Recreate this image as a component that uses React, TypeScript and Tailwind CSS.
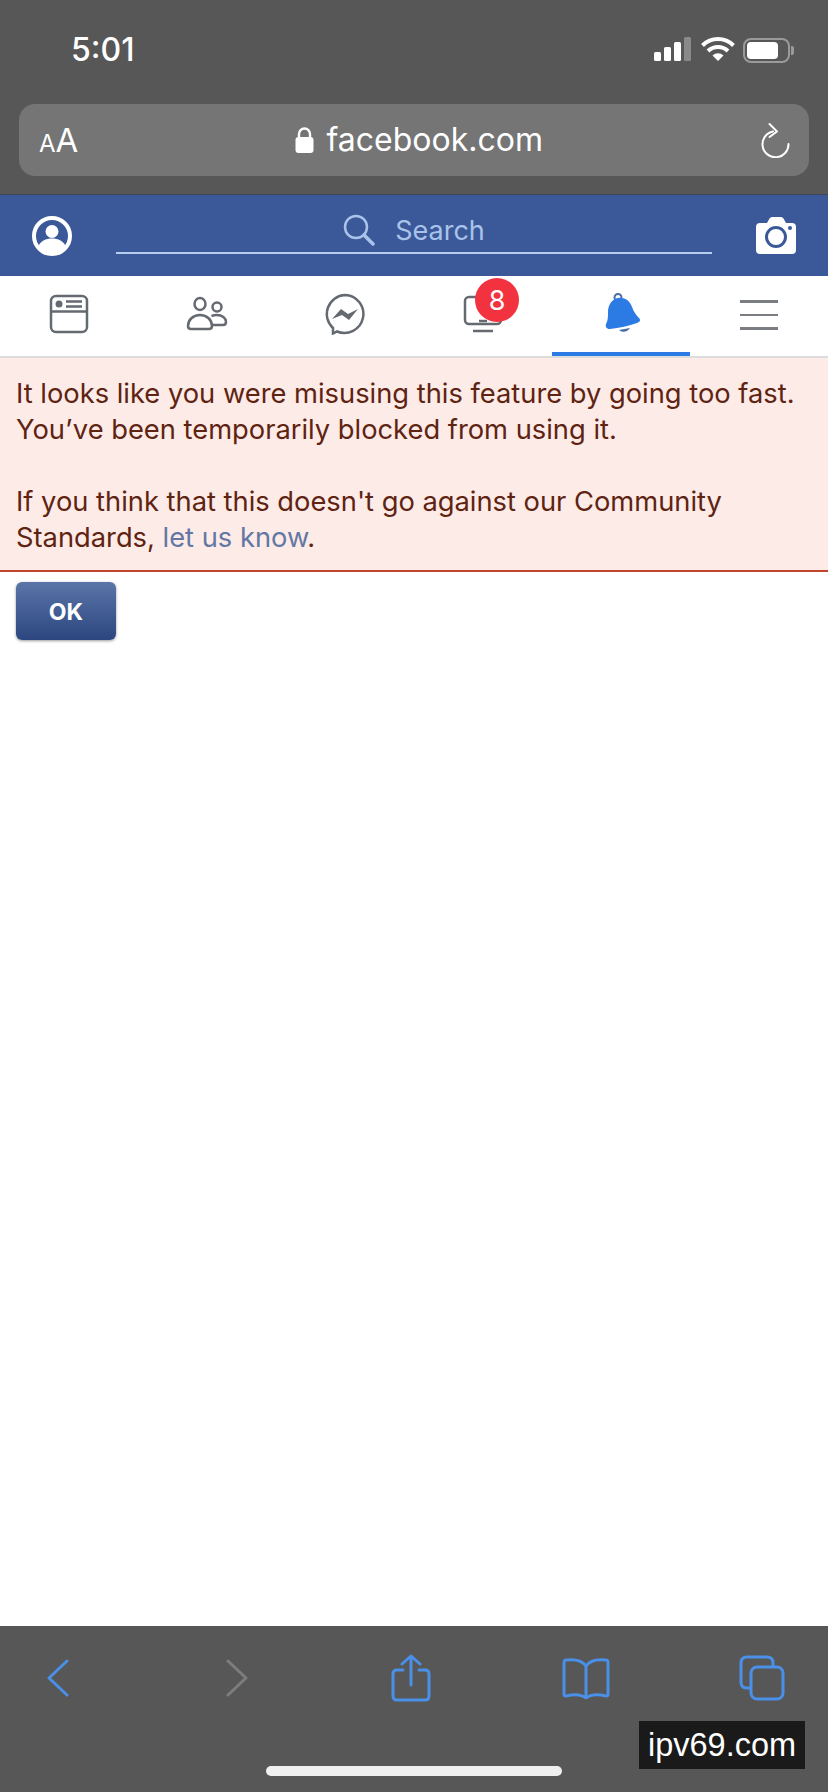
const BLUE = '#4a8fe8';
const NAV_GREY = '#656a70';

function StatusIcons() {
  return (
    <div className="flex items-center">
      <svg width="40" height="26" viewBox="0 0 40 26" className="mr-[7px]">
        <rect x="0" y="15" width="7" height="9" rx="1.5" fill="#fff" />
        <rect x="10" y="10" width="7" height="14" rx="1.5" fill="#fff" />
        <rect x="20" y="5" width="7" height="19" rx="1.5" fill="#fff" />
        <rect x="30" y="0" width="7" height="24" rx="1.5" fill="#8a8a8a" />
      </svg>
      <svg width="34" height="26" viewBox="0 0 34 26" className="mr-[8px]">
        <path d="M1.5 8.5a22 22 0 0 1 31 0" fill="none" stroke="#fff" strokeWidth="4" />
        <path d="M7 14a14.5 14.5 0 0 1 20 0" fill="none" stroke="#fff" strokeWidth="4" />
        <path d="M17 24l-5.5-5.5a8 8 0 0 1 11 0z" fill="#fff" />
      </svg>
      <div className="flex items-center">
        <div className="flex h-[25px] w-[47px] items-center rounded-[8px] border-2 border-[#9a9a9a] px-[2px]">
          <div className="h-[17px] w-[31px] rounded-[4px] bg-white" />
        </div>
        <div className="ml-[1px] h-[9px] w-[3px] rounded-r-[2px] bg-[#9a9a9a]" />
      </div>
    </div>
  );
}

function Reload() {
  return (
    <svg width="32" height="36" viewBox="0 0 32 36" fill="none" stroke="#fff" strokeWidth="2" strokeLinecap="round" strokeLinejoin="round">
      <path d="M13 9.500a13 13 0 1 0 15.500 12.500" />
      <path d="M9.500 2l7.500 7.500L9.500 15" />
    </svg>
  );
}

function SafariTop() {
  return (
    <div className="h-[195px] border-b border-[#3d4656] bg-[#575757]">
      <div className="flex h-[104px] items-center justify-between pb-[4px] pl-[71px] pr-[34px]">
        <span className="font-['Inter',sans-serif] text-[32px] font-medium leading-none text-white">5:01</span>
        <StatusIcons />
      </div>
      <div className="mx-[19px] flex h-[72px] items-center justify-between rounded-[16px] bg-[#757575] pl-[20px] pr-[17px]">
        <span className="font-['Inter',sans-serif] leading-none text-white">
          <span className="text-[24px]">A</span>
          <span className="text-[33px]">A</span>
        </span>
        <div className="flex items-center gap-[12px]">
          <svg width="19" height="26" viewBox="0 0 19 26" fill="#fff">
            <path d="M4 11V7a5.500 5.500 0 0 1 11 0v4" fill="none" stroke="#fff" strokeWidth="2.400" />
            <rect x="0.500" y="10" width="18" height="16" rx="3" />
          </svg>
          <span className="font-['Inter',sans-serif] text-[32px] leading-none text-white">facebook.com</span>
        </div>
        <Reload />
      </div>
    </div>
  );
}

function FbHeader() {
  return (
    <div className="flex h-[81px] items-center bg-[#3b5998] pl-[32px] pr-[32px]">
      <svg width="40" height="40" viewBox="0 0 40 40" className="shrink-0">
        <circle cx="20" cy="20" r="18" fill="#3b5998" stroke="#fff" strokeWidth="4" />
        <circle cx="20" cy="15.500" r="6.500" fill="#fff" />
        <path d="M6 31c2-6 8-8.500 14-8.500S32 25 34 31a18 18 0 0 1-28 0z" fill="#fff" />
      </svg>
      <div className="ml-[44px] mt-[16px] flex h-[43px] w-[597px] items-center justify-center gap-[20px] self-start border-b-2 border-[#b4cdf0] pb-[3px]">
        <svg width="32" height="32" viewBox="0 0 32 32" fill="none" stroke="#a9c3ea" strokeWidth="2.500" strokeLinecap="round">
          <circle cx="13" cy="13" r="11" />
          <path d="M21 21l9 9" strokeWidth="3.500" />
        </svg>
        <span className="font-['Inter',sans-serif] text-[27px] leading-none text-[#a9c3ea]">Search</span>
      </div>
      <svg width="40" height="37" viewBox="0 0 40 37" className="ml-[44px] shrink-0">
        <path d="M4 6h7l2.500-4.500Q14.500 0 16 0h9q1.500 0 2.500 1.500L30 6h6q4 0 4 4v23q0 4-4 4H4q-4 0-4-4V10q0-4 4-4z" fill="#fff" />
        <circle cx="20" cy="20" r="9.500" fill="#fff" stroke="#3b5998" strokeWidth="3" />
        <circle cx="34" cy="11" r="2" fill="#3b5998" />
      </svg>
    </div>
  );
}

function NavIcon({ index }: { index: number }) {
  if (index === 0) {
    return (
      <svg width="40" height="40" viewBox="0 0 40 40" fill="none" stroke={NAV_GREY} strokeWidth="2.500">
        <rect x="2" y="2" width="36" height="36" rx="5" />
        <path d="M2 17.500h36" />
        <circle cx="10" cy="10" r="3.500" fill={NAV_GREY} stroke="none" />
        <path d="M17 7.500h16M17 12.500h16" />
      </svg>
    );
  }
  if (index === 1) {
    return (
      <svg width="42" height="36" viewBox="0 0 42 36" fill="none" stroke={NAV_GREY} strokeWidth="2.500">
        <ellipse cx="14" cy="8" rx="5.500" ry="6" />
        <circle cx="31" cy="11" r="4.500" />
        <path d="M5 33h18q3 0 3-3c0-6-5-11-12-11S2 24 2 30q0 3 3 3z" />
        <path d="M26 29h11q3 0 3-3c0-4-4-7-9-7q-3 0-5.500 1" />
      </svg>
    );
  }
  if (index === 2) {
    return (
      <svg width="42" height="42" viewBox="0 0 42 42" fill="none" stroke={NAV_GREY} strokeWidth="2.500">
        <path d="M21 2a19 19 0 1 1-8 36.500L9 40.500V35A19 19 0 0 1 21 2z" />
        <path d="M8 26l9-10 7 5 10-5-9 11-7-5z" fill={NAV_GREY} stroke="none" />
      </svg>
    );
  }
  if (index === 3) {
    return (
      <div className="relative h-[38px] w-[40px]">
        <svg width="40" height="38" viewBox="0 0 40 38" fill="none" stroke={NAV_GREY} strokeWidth="2.500">
          <rect x="2" y="2" width="36" height="27" rx="4" />
          <path d="M10 36h20" />
          <path d="M16 26h8" />
        </svg>
        <div className="absolute left-[12px] top-[-17px] flex h-[44px] w-[44px] items-center justify-center rounded-full bg-[#f2323f] font-['Inter',sans-serif] text-[27px] leading-none text-white">
          8
        </div>
      </div>
    );
  }
  if (index === 4) {
    return (
      <svg width="36" height="42" viewBox="0 0 36 42" className="ml-[3px]">
        <circle cx="13" cy="4.500" r="3.500" fill="none" stroke="#4a6da8" strokeWidth="2" />
        <path d="M13 5c7-1 12 3 14 9 2 5 4 8 7 11 2 2 1 4-2 5-8 3-18 5-27 6-3 0-5-2-4-5 2-4 2-7 2-12C3 12 7 6 13 5z" fill="#2c7be5" />
        <path d="M14 37c3 3 9 2 11-2z" fill="#4a6da8" />
      </svg>
    );
  }
  return (
    <div className="mt-[2px] flex w-[38px] flex-col gap-[11px]">
      <div className="h-[2.500px] bg-[#7a7e83]" />
      <div className="h-[2.500px] bg-[#7a7e83]" />
      <div className="h-[2.500px] bg-[#7a7e83]" />
    </div>
  );
}

function FbNav() {
  return (
    <div className="grid h-[82px] grid-cols-6 border-b-2 border-[#dddddd] bg-white">
      {[0, 1, 2, 3, 4, 5].map((i) => (
        <div
          key={i}
          className={i === 4 ? 'flex items-center justify-center border-b-4 border-[#2c7be5]' : 'flex items-center justify-center pb-[4px]'}
        >
          <NavIcon index={i} />
        </div>
      ))}
    </div>
  );
}

function Notice() {
  return (
    <div className="border-b-2 border-[#c0452a] bg-[#fdebe7] px-[16px] pt-[18px] pb-[14px] font-['Inter',sans-serif] text-[27.300px] leading-[36px] text-[#5f2312]">
      <p>It looks like you were misusing this feature by going too fast.</p>
      <p>You’ve been temporarily blocked from using it.</p>
      <p className="mt-[36px]">If you think that this doesn't go against our Community</p>
      <p>
        Standards, <span className="text-[#6277a4]">let us know</span>.
      </p>
    </div>
  );
}

function BarIcon({ children }: { children: React.ReactNode }) {
  return <div className="flex w-[48px] justify-center">{children}</div>;
}

function SafariBottom() {
  return (
    <div className="relative h-[166px] bg-[#575757]">
      <div className="flex h-[106px] items-center justify-between pb-[2px] pl-[34px] pr-[42px]">
        <BarIcon>
          <svg width="22" height="38" viewBox="0 0 22 38" fill="none" stroke={BLUE} strokeWidth="3" strokeLinecap="round" strokeLinejoin="round">
            <path d="M20 2L2 19l18 17" />
          </svg>
        </BarIcon>
        <BarIcon>
          <svg width="22" height="38" viewBox="0 0 22 38" fill="none" stroke="#7d7d7d" strokeWidth="3" strokeLinecap="round" strokeLinejoin="round" className="ml-[6px]">
            <path d="M2 2l18 17L2 36" />
          </svg>
        </BarIcon>
        <BarIcon>
          <svg width="40" height="48" viewBox="0 0 40 48" fill="none" stroke={BLUE} strokeWidth="3" strokeLinecap="round" strokeLinejoin="round" className="ml-[2px]">
            <path d="M12 16H6q-4 0-4 4v22q0 4 4 4h28q4 0 4-4V20q0-4-4-4h-6" />
            <path d="M20 31V2M11 10l9-8 9 8" />
          </svg>
        </BarIcon>
        <BarIcon>
          <svg width="48" height="42" viewBox="0 0 48 42" fill="none" stroke={BLUE} strokeWidth="3" strokeLinecap="round" strokeLinejoin="round">
            <path d="M24 9C20 3 12 2 4 3q-2 0-2 3v31c0 2 1 2 2 2 8-2 15-2 20 2 5-4 12-4 20-2 1 0 2 0 2-2V6q0-3-2-3c-8-1-16 0-20 6z" />
            <path d="M24 9v32" />
          </svg>
        </BarIcon>
        <BarIcon>
          <svg width="46" height="46" viewBox="0 0 46 46" fill="none" stroke={BLUE} strokeWidth="3" strokeLinejoin="round">
            <path d="M12 33H8q-6 0-6-6V8q0-6 6-6h20q6 0 6 6v4" />
            <rect x="12" y="12" width="32" height="32" rx="6" />
          </svg>
        </BarIcon>
      </div>
      <div className="mx-auto mt-[34px] h-[10px] w-[296px] rounded-full bg-[#f0f0f0]" />
      <div className="absolute left-[639px] top-[95px] flex h-[48px] w-[166px] items-center justify-center bg-[#1a1a1a] font-['Liberation_Sans',sans-serif] text-[32.500px] leading-none text-white">
        ipv69.com
      </div>
    </div>
  );
}

export default function App() {
  return (
    <div className="flex h-[1792px] w-[828px] flex-col overflow-hidden bg-white">
      <SafariTop />
      <FbHeader />
      <FbNav />
      <Notice />
      <div className="flex-1 px-[16px] pt-[10px]">
        <button className="flex h-[58px] w-[100px] items-center justify-center rounded-[6px] bg-gradient-to-b from-[#5b75a8] to-[#2c4780] pt-[2px] font-['Inter',sans-serif] text-[23px] font-bold text-white shadow-[0_1px_3px_rgba(0,0,0,0.4)]">
          OK
        </button>
      </div>
      <SafariBottom />
    </div>
  );
}
